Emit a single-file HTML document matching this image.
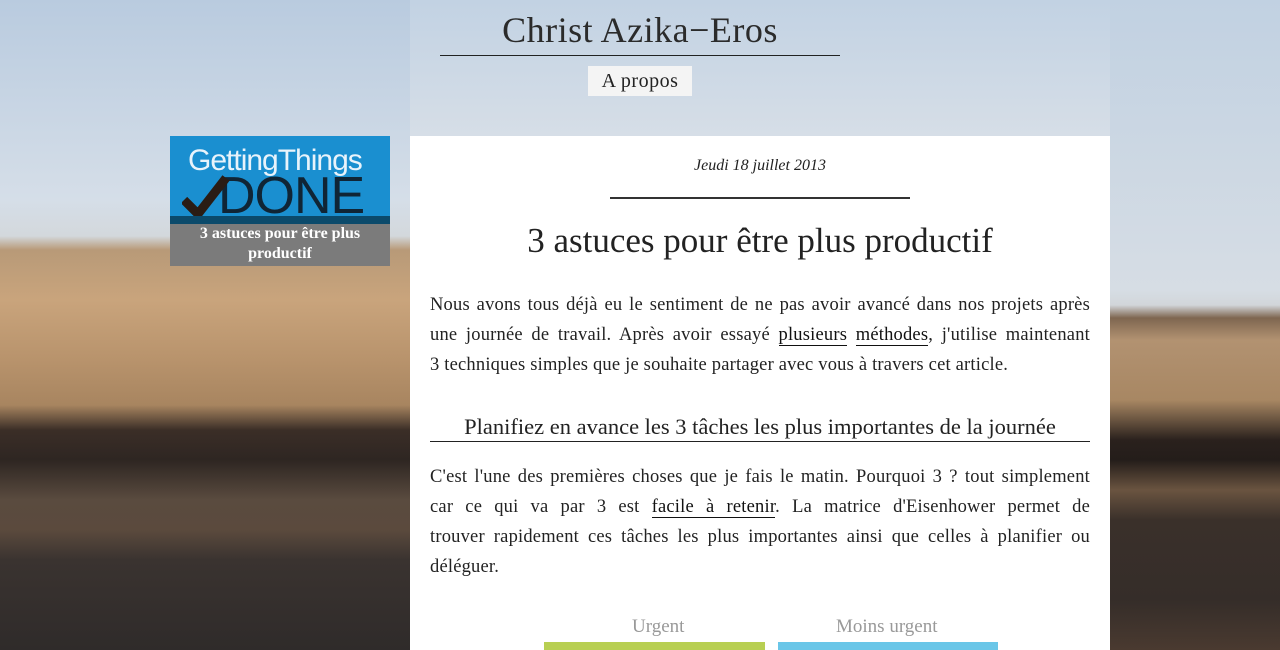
<!DOCTYPE html>
<html><head><meta charset="utf-8"><style>
*{margin:0;padding:0;box-sizing:border-box}
html{overflow:hidden;width:1280px;height:650px}
body{width:1280px;height:650px;overflow:hidden;position:relative;font-family:"Liberation Serif",serif;color:#222;background:#c9d6e2}
.bgL{position:absolute;left:0;top:0;width:410px;height:650px;background:linear-gradient(180deg,#b9cbdf 0px,#d5dee8 200px,#d3d8dc 236px,#b89a78 250px,#c9a47c 300px,#b8936c 360px,#a88560 405px,#3b2e27 430px,#2e2622 460px,#5a4b3f 500px,#5b4a3d 530px,#3a3330 560px,#2f2b2a 650px)}
.bgR{position:absolute;left:1110px;top:0;width:170px;height:650px;background:linear-gradient(180deg,#c1d1e2 0px,#d6dde4 290px,#d2d6da 305px,#7e6650 318px,#b29271 340px,#a88763 400px,#2a211d 440px,#241d1a 460px,#6a5440 490px,#3a302a 520px,#352d29 600px,#4a3a30 650px)}
.bgM{position:absolute;left:410px;top:0;width:700px;height:136px;background:linear-gradient(180deg,#c2d2e3,#d6dee7)}
h1{position:absolute;left:440px;width:400px;top:8px;text-align:center;font-weight:normal;font-size:36px;letter-spacing:0.5px;color:#2b2b2b;border-bottom:1px solid #222;height:48px;line-height:44px}
.nav{position:absolute;left:588px;top:66px;width:104px;height:30px;background:#f4f4f4;text-align:center;font-size:20px;line-height:30px;letter-spacing:0.5px}
.thumb{position:absolute;left:170px;top:136px;width:220px;height:130px;background:#1a8fd0;overflow:hidden}
.thumb .gt{position:absolute;left:18px;top:8px;font-family:"Liberation Sans",sans-serif;font-size:30px;color:#e8f3fb;letter-spacing:-1px}
.thumb .done{position:absolute;left:48px;top:30px;font-family:"Liberation Sans",sans-serif;font-size:52px;color:#102535;letter-spacing:-1px}
.thumb .band{position:absolute;left:0;top:80px;width:220px;height:10px;background:#0b4a6b}
.thumb .cap{position:absolute;left:0;top:88px;width:220px;height:42px;background:#7b7b7b;color:#fff;text-align:center;font-size:16px;font-weight:bold;line-height:20px}
.card{position:absolute;left:410px;top:136px;width:700px;height:514px;background:#fff;padding:0 20px;overflow:hidden}
.date{text-align:center;font-style:italic;font-size:16px;margin-top:20px;line-height:20px}
.hr{width:300px;margin:21px auto 0;border-top:2px solid #333}
h2{text-align:center;font-weight:normal;font-size:35px;margin-top:22px;line-height:40px;color:#222}
p{font-size:18.5px;line-height:30px;color:#222;letter-spacing:0.2px}
p span{display:block;text-align:justify;text-align-last:justify;white-space:nowrap}
p span.l{text-align-last:left}
p.a{margin-top:29px}
a{color:#111;text-decoration:none;border-bottom:1px solid #111}
h3{font-weight:normal;font-size:22.5px;text-align:center;border-bottom:1px solid #222;margin-top:28px;line-height:30px;height:34px;padding-top:4px}
p.b{margin-top:20px}
.heads{position:absolute;top:480px;left:134px;width:454px;font-size:19px;color:#999}
.heads span{position:absolute;top:0}
.g{position:absolute;left:134px;top:506px;width:221px;height:20px;background:#b8cf52}
.bl{position:absolute;left:368px;top:506px;width:220px;height:20px;background:#6ac6e8}
</style></head><body>
<div class="bgL"></div><div class="bgR"></div><div class="bgM"></div>
<h1>Christ Azika−Eros</h1>
<div class="nav">A propos</div>
<div class="thumb"><div class="gt">GettingThings</div><div class="done">DONE</div>
<svg style="position:absolute;left:12px;top:38px" width="48" height="46"><path d="M2 26 L16 40 L44 4" stroke="#2a1c14" stroke-width="9" fill="none"/></svg>
<div class="band"></div><div class="cap">3 astuces pour être plus<br>productif</div></div>
<div class="card">
<div class="date">Jeudi 18 juillet 2013</div>
<div class="hr"></div>
<h2>3 astuces pour être plus productif</h2>
<p class="a"><span>Nous avons tous déjà eu le sentiment de ne pas avoir avancé dans nos projets après</span><span>une journée de travail. Après avoir essayé <a>plusieurs</a> <a>méthodes</a>, j'utilise maintenant</span><span class="l">3 techniques simples que je souhaite partager avec vous à travers cet article.</span></p>
<h3>Planifiez en avance les 3 tâches les plus importantes de la journée</h3>
<p class="b"><span>C'est l'une des premières choses que je fais le matin. Pourquoi 3 ? tout simplement</span><span>car ce qui va par 3 est <a>facile à retenir</a>. La matrice d'Eisenhower permet de</span><span>trouver rapidement ces tâches les plus importantes ainsi que celles à planifier ou</span><span class="l">déléguer.</span></p>
<div class="heads"><span style="left:88px">Urgent</span><span style="left:292px">Moins urgent</span></div>
<div class="g"></div><div class="bl"></div>
</div>
</body></html>
